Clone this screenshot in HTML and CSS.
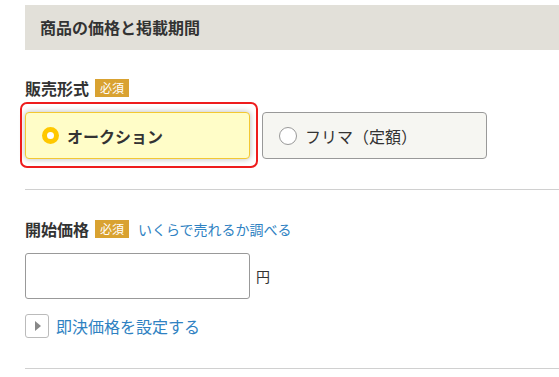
FILE: index.html
```html
<!DOCTYPE html>
<html lang="ja">
<head>
    <meta charset="UTF-8">
    <meta name="viewport" content="width=device-width, initial-scale=1.0">
    <title>商品の価格と掲載期間</title>
    <link rel="stylesheet" href="styles.css">
</head>
<body>

<h2 class="section-title">商品の価格と掲載期間</h2>

<div class="field">
    <div class="field-label">
        <span class="label-text">販売形式</span>
        <span class="badge">必須</span>
    </div>
    <div class="options">
        <label class="option selected">
            <span class="radio"></span>
            <span class="option-text">オークション</span>
        </label>
        <label class="option">
            <span class="radio"></span>
            <span class="option-text">フリマ（定額）</span>
        </label>
    </div>
</div>

<div class="field">
    <div class="field-label">
        <span class="label-text">開始価格</span>
        <span class="badge">必須</span>
        <a class="link" href="#">いくらで売れるか調べる</a>
    </div>
    <div class="price-row">
        <input type="text" class="price-input">
        <span class="unit">円</span>
    </div>
    <div class="toggle-row">
        <span class="toggle-btn"><span class="arrow"></span></span>
        <a class="link big" href="#">即決価格を設定する</a>
    </div>
</div>

</body>
</html>
```

FILE: styles.css
```css
body {
    font-family: "Noto Sans CJK JP", "Noto Sans", sans-serif;
    margin: 0;
    padding: 5px 0 0 25px;
    background: #fff;
    color: #333;
}
.section-title {
    margin: 0;
    height: 45px;
    line-height: 45px;
    padding-left: 15px;
    background: #e2e0d9;
    font-size: 16px;
    font-weight: bold;
}
.field {
    padding: 29px 0 30px;
    border-bottom: 1px solid #d0d0d0;
}
.field + .field {
    padding-top: 30px;
}
.field-label {
    display: flex;
    align-items: center;
    height: 18px;
}
.label-text {
    font-size: 16px;
    font-weight: bold;
}
.badge {
    margin-left: 6px;
    height: 18px;
    line-height: 18px;
    padding: 0 5px;
    background: #d9a231;
    color: #fff;
    font-size: 12px;
}
.link {
    color: #2f82c2;
    text-decoration: none;
    font-size: 14px;
    margin-left: 9px;
}
.link.big {
    font-size: 16px;
    margin-left: 7px;
}
.options {
    display: flex;
    gap: 12px;
    margin-top: 15px;
}
.option {
    position: relative;
    width: 225px;
    height: 47px;
    box-sizing: border-box;
    display: flex;
    align-items: center;
    padding-left: 16px;
    border: 1px solid #999;
    border-radius: 4px;
    background: #f6f6f2;
    font-size: 16px;
}
.option.selected {
    background: #fffdc8;
    border-color: #f3c832;
    box-shadow: 0 0 6px rgba(0, 0, 0, 0.28);
    font-weight: bold;
}
.option.selected::after {
    content: "";
    position: absolute;
    left: -6px;
    top: -11px;
    right: -9px;
    bottom: -10px;
    border: 2px solid #ee1c1c;
    border-radius: 7px;
}
.radio {
    width: 18px;
    height: 18px;
    box-sizing: border-box;
    border: 1px solid #999;
    border-radius: 50%;
    background: #fff;
    margin-right: 8px;
}
.selected .radio {
    border: 5px solid #ffc800;
    width: 17px;
    height: 17px;
}
.price-row {
    display: flex;
    align-items: center;
    margin-top: 15px;
}
.price-input {
    width: 225px;
    height: 46px;
    box-sizing: border-box;
    border: 1px solid #999;
    border-radius: 3px;
    margin: 0;
}
.unit {
    font-size: 14px;
    margin-left: 6px;
}
.toggle-row {
    display: flex;
    align-items: center;
    margin-top: 15px;
}
.toggle-btn {
    width: 24px;
    height: 24px;
    box-sizing: border-box;
    border: 1px solid #bbb;
    border-radius: 3px;
    display: flex;
    align-items: center;
    justify-content: center;
}
.arrow {
    width: 0;
    height: 0;
    border-top: 5px solid transparent;
    border-bottom: 5px solid transparent;
    border-left: 6px solid #888;
    margin-left: 2px;
}
```
